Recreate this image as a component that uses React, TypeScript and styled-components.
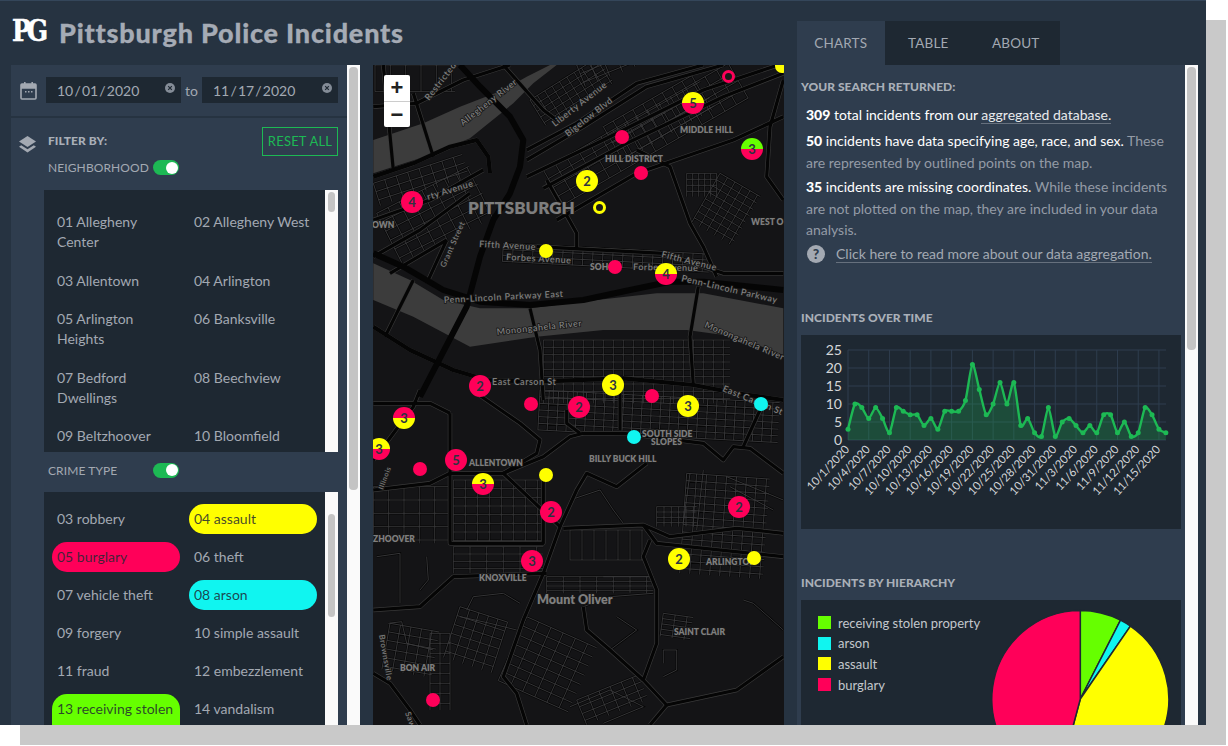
import React from "react";
import styled, { createGlobalStyle } from "styled-components";

const FONT = `Lato, "Open Sans", "Liberation Sans", sans-serif`;

const Global = createGlobalStyle`
  html, body { margin: 0; padding: 0; background: #fff; font-family: ${FONT}; }
  * { box-sizing: border-box; }
`;

const Page = styled.div`width: 1228px; height: 746px; overflow: hidden; background: #fff;`;
const Win = styled.div`
  width: 1206px; height: 725px; display: flex; padding-left: 11px; overflow: hidden;
  background: #263341; box-shadow: 20px 20px 0 #c9c9c9; border-top: 1px solid #34465a;
`;
const Main = styled.div`width: 773px; display: flex; flex-direction: column;`;
const Header = styled.header`height: 64px; display: flex; align-items: center; flex: none; padding-bottom: 2px;`;
const Logo = styled.div`
  width: 48px; font: 700 25px/1 "DejaVu Serif", serif; color: #fff; letter-spacing: -4px; margin-left: 1px; margin-top: -3px;
  transform: scaleY(1.2); -webkit-text-stroke: .5px #fff;
`;
const Title = styled.h1`margin: 0 0 0 -1px; font: 900 27px/1 ${FONT}; color: #a5abb5; letter-spacing: .8px; -webkit-text-stroke: .3px #a5abb5;`;
const Body = styled.div`display: flex; height: 660px;`;
const LeftPanel = styled.div`width: 336px; height: 660px; background: #2f3d4e; overflow: hidden; flex: none;`;
const Track = styled.div`width: 13px; flex: none; background: #fafafa; padding: 2px 2px 0;`;
const Thumb = styled.div<{ $h: number; $top?: number; $w?: number }>`
  height: ${p => p.$h}px; margin-top: ${p => p.$top ?? 0}px; background: #c4c4c4; border-radius: 4px;
  width: ${p => p.$w ?? 9}px; margin-left: ${p => (p.$w ? 1 : 0)}px;
`;
const DateRow = styled.div`
  height: 53px; display: flex; align-items: flex-start; padding: 12px 9px 0; border-bottom: 2px solid #263341;
`;
const CalIcon = styled.svg`width: 17px; height: 18px; margin-top: 5px; margin-right: 9px; flex: none;`;
const DateField = styled.div<{ $w: number }>`
  width: ${p => p.$w}px; height: 26px; background: #1e2832; color: #a3a9b2; font-size: 14px; line-height: 27px;
  padding-left: 11px; position: relative; word-spacing: -2.4px; white-space: pre;
`;
const Clear = styled.svg`position: absolute; right: 6px; top: 6px; width: 10px; height: 10px;`;
const To = styled.span`width: 21px; text-align: center; font-size: 14px; line-height: 27px; color: #a3a9b2; flex: none;`;
const FilterHead = styled.div`height: 72px; display: flex; padding: 9px 9px 0 8px;`;
const LayersIcon = styled.svg`width: 17px; height: 18px; margin: 9px 12px 0 0; flex: none;`;
const FilterCol = styled.div`flex: 1; padding-top: 6px;`;
const SmallBold = styled.div<{ $mt?: number }>`
  font: 900 12px/16px ${FONT}; color: #a9afb8; letter-spacing: .05px; margin-top: ${p => p.$mt ?? 0}px;
`;
const LabelRow = styled.div`display: flex; align-items: center; color: #a3a9b2; font-size: 12px;`;
const NeighRow = styled(LabelRow)`margin-top: 11px;`;
const Label = styled.span`width: 105px; flex: none; text-transform: uppercase; letter-spacing: .1px;`;
const Toggle = styled.div`
  width: 26px; height: 15px; border-radius: 8px; background: #1db954; display: flex; justify-content: flex-end; padding: 1.5px 1.5px;
  &::after { content: ""; width: 12px; height: 12px; border-radius: 50%; background: #fff; }
`;
const Reset = styled.button`
  width: 76px; height: 29px; border: 1px solid #1db954; background: transparent; color: #1db954;
  font: 400 13px/1 ${FONT}; letter-spacing: .2px; padding: 0;
`;
const ListBox = styled.div<{ $h: number }>`
  margin-left: 33px; width: 294px; height: ${p => p.$h}px; display: flex; background: #1e2832; overflow: hidden; flex: none;
`;
const ListGrid = styled.div<{ $top: number; $gap: number }>`
  flex: 1; display: grid; grid-template-columns: 128px 128px; column-gap: 9px; row-gap: ${p => p.$gap}px; align-content: start; align-items: start;
  padding: ${p => p.$top}px 0 0 8px; overflow: hidden;
`;
const Item = styled.div<{ $bg?: string }>`
  padding: 5px 3px 5px 5px; font-size: 14px; line-height: 20px; border-radius: 15px;
  background: ${p => p.$bg ?? "transparent"}; color: ${p => (p.$bg ? "rgba(30,40,50,.85)" : "#a3a9b2")};
`;
const CrimeRow = styled(LabelRow)`height: 40px; padding: 0 0 4px 37px;`;
const MapWrap = styled.div`width: 411px; height: 660px; margin-left: 13px; background: #141416; position: relative; overflow: hidden; flex: none;`;
const MapSvg = styled.svg`display: block; width: 411px; height: 660px;`;
const Zoom = styled.div`
  position: absolute; left: 11px; top: 10px; width: 26px; height: 52px; background: #fff; border-radius: 2px; display: flex; flex-direction: column;
`;
const ZoomBtn = styled.div`
  height: 26px; display: flex; align-items: center; justify-content: center; color: #222; font: 700 22px/1 "Liberation Sans", sans-serif;
  & + & { border-top: 1px solid #ccc; }
`;
const Marker = styled.div<{ $bg: string; $size: number }>`
  position: absolute; width: ${p => p.$size}px; height: ${p => p.$size}px; margin: ${p => -p.$size / 2}px 0 0 ${p => -p.$size / 2}px;
  border-radius: 50%; background: ${p => p.$bg}; color: #2b3440; font: 700 13px/1 ${FONT};
  display: flex; align-items: center; justify-content: center;
`;
const Ring = styled.div<{ $c: string }>`
  position: absolute; width: 13px; height: 13px; margin: -6.5px 0 0 -6.5px; border-radius: 50%; border: 3.5px solid ${p => p.$c}; background: #1a1a1a;
`;
const Side = styled.div`width: 401px; margin-left: 13px; padding-top: 20px; display: flex; flex-direction: column; height: 724px;`;
const Tabs = styled.div`display: flex; height: 44px; flex: none;`;
const Tab = styled.div<{ $active?: boolean }>`
  width: 87.5px; display: flex; align-items: center; justify-content: center; text-transform: uppercase; font-size: 13.5px; letter-spacing: .2px;
  color: #a3a9b2; background: ${p => (p.$active ? "#2f3d4e" : "#1e2832")};
`;
const SideRow = styled.div`display: flex; height: 660px;`;
const Content = styled.div`width: 388px; background: #2f3d4e; padding: 14px 4px 0; overflow: hidden;`;
const Para = styled.p<{ $mt: number }>`
  margin: ${p => p.$mt}px 0 0 5px; font-size: 14px; line-height: 21.5px; color: #949ba6; width: 372px;
`;
const Strong = styled.span`color: #fff;`;
const Num = styled.b`color: #fff; font-weight: 900;`;
const LinkW = styled.span`color: #e8eaec; border-bottom: 1px solid #66707d;`;
const Help = styled.div`display: flex; align-items: center; margin: 4.5px 0 0 6px; font-size: 14px; line-height: 21.5px; color: #a3a9b2;`;
const HelpDot = styled.span`
  width: 18px; height: 18px; border-radius: 50%; background: #a3a9b2; color: #2f3d4e; font: 900 14px/18px ${FONT}; text-align: center; margin-right: 11px; flex: none;
`;
const HelpLink = styled.span`border-bottom: 1px solid #66707d; line-height: 17px;`;
const ChartBox = styled.div`width: 380px; height: 194px; background: #1e2832; margin-top: 9px;`;
const PieBox = styled.div`width: 380px; height: 200px; background: #1e2832; margin-top: 9px; display: flex; justify-content: space-between; padding: 16px 9px 0 17px;`;
const Legend = styled.div`display: flex; flex-direction: column; gap: 7.7px; flex: none;`;
const LegendRow = styled.div`display: flex; align-items: center; height: 13px; font-size: 13px; color: #c3c7cc; white-space: nowrap;`;
const Swatch = styled.span<{ $c: string }>`width: 13px; height: 13px; background: ${p => p.$c}; margin-right: 7px;`;
const PieSvg = styled.svg`width: 184px; height: 190px; margin-top: -16px; flex: none;`;
const ChartSvg = styled.svg`display: block; width: 380px; height: 194px;`;

const PINK = "#ff0059", YEL = "#ffff00", CY = "#10f5f0", GR = "#66ff00";
type Pt = [number, number];
const z3 = ([x, y]: Pt): Pt => [x / 3 - 3, y / 3 - 5];
const z4 = ([x, y]: Pt): Pt => [x / 3 - 3, y / 3 + 325];
const pathOf = (pts: Pt[], f: (p: Pt) => Pt) => pts.map((p, i) => (i ? "L" : "M") + f(p).map(v => v.toFixed(1)).join(" ")).join("");

const majorA: Pt[][] = [
  [[270, 15], [330, 80], [420, 170], [460, 240], [450, 320], [420, 400], [370, 480], [330, 590], [290, 740], [150, 1010]],
  [[10, 350], [130, 310], [240, 260], [320, 240], [355, 290], [360, 340]],
  [[10, 580], [100, 620], [220, 690], [330, 725], [480, 735], [640, 720], [780, 690], [900, 665], [1000, 665], [1240, 690]],
  [[470, 270], [620, 190], [800, 70], [1000, 15]],
  [[470, 350], [700, 240], [1000, 90], [1240, 10]],
  [[130, 660], [45, 830]],
  [[480, 745], [510, 870], [520, 1020]],
  [[985, 680], [960, 830], [970, 975]],
  [[10, 800], [120, 870], [250, 930], [350, 960], [500, 965], [760, 955], [970, 975], [1100, 1000], [1240, 1020]],
  [[10, 140], [140, 130], [280, 60], [420, 15]],
  [[800, 270], [900, 320], [960, 490], [1000, 560], [1040, 650]],
  [[1240, 60], [1200, 200], [1190, 350], [1240, 420]],
  [[530, 360], [620, 520], [620, 570]],
  [[400, 15], [520, 150], [560, 180]],
  [[10, 590], [150, 510], [300, 400]],
  [[470, 300], [640, 200], [830, 80], [1060, 15]],
  [[520, 385], [760, 255], [1060, 110], [1240, 40]],
  [[560, 480], [800, 340], [1090, 240], [1240, 170]],
  [[40, 15], [70, 330]],
  [[130, 100], [190, 290]],
  [[500, 560], [880, 580], [1060, 640], [1240, 640]],
  [[10, 480], [180, 420], [340, 330]],
  [[60, 640], [230, 540]],
  [[230, 540], [170, 670]],
];
const majorB: Pt[][] = [
  [[10, 300], [180, 280], [240, 250], [400, 250], [520, 200], [600, 140], [640, 130], [760, 130], [1000, 160], [1060, 210], [1090, 170], [1140, 175], [1240, 250]],
  [[240, 70], [240, 460], [520, 460], [520, 250]],
  [[240, 70], [180, 40], [10, 40]],
  [[10, 660], [150, 650], [250, 560], [530, 550]],
  [[400, 250], [570, 410], [520, 550], [460, 690], [400, 860], [440, 910], [470, 1005]],
  [[570, 410], [620, 300], [650, 250], [740, 290], [830, 220]],
  [[580, 415], [820, 405], [900, 440], [1100, 415], [1240, 430]],
  [[820, 405], [860, 460], [1240, 500]],
  [[840, 450], [820, 500], [860, 600], [860, 760], [820, 870], [890, 945], [1100, 900], [1240, 800]],
  [[890, 945], [840, 1005]],
  [[640, 650], [650, 720], [720, 780], [820, 870]],
  [[10, 850], [60, 880], [120, 960], [150, 1005]],
  [[590, 60], [590, 100], [630, 130]],
  [[320, 10], [450, 100], [510, 150], [500, 190], [400, 250]],
  [[1170, 60], [1120, 170]],
  [[750, 0], [750, 120]],
  [[150, 0], [130, 50], [40, 170], [10, 210]],
];

const minorB: Pt[][] = [
  [[290, 660], [310, 620], [400, 610], [450, 640]],
  [[270, 680], [360, 700], [440, 720]],
  [[600, 330], [690, 300], [730, 360], [760, 400]],
  [[880, 820], [880, 780], [920, 780], [920, 840], [880, 860]],
  [[700, 560], [840, 560]],
  [[640, 650], [720, 620], [850, 610]],
  [[1120, 630], [1150, 640], [1240, 720]],
  [[55, 700], [95, 695], [110, 760], [190, 780]],
  [[600, 950], [720, 900], [820, 950], [700, 1000]],
  [[720, 780], [800, 720], [740, 680]],
  [[960, 250], [940, 400]],
  [[1000, 240], [980, 420]],
  [[1070, 260], [1240, 330]],
  [[1080, 290], [1210, 360]],
  [[170, 500], [175, 570], [150, 600]],
  [[20, 500], [90, 490], [90, 640]],
];

const grid = (x: number, y: number, w: number, h: number, a: number, dx: number, dy: number, f: (p: Pt) => Pt) => {
  const r = (a * Math.PI) / 180, c = Math.cos(r), s = Math.sin(r);
  const t = (u: number, v: number): Pt => [x + u * c - v * s, y + u * s + v * c];
  let d = "";
  for (let u = 0; u <= w; u += dx) d += pathOf([t(u, 0), t(u, h)], f);
  for (let v = 0; v <= h; v += dy) d += pathOf([t(0, v), t(w, v)], f);
  return d;
};
const streets = [
  grid(20, 460, 310, 170, -27, 38, 30, z3),
  grid(10, 370, 280, 70, -18, 36, 26, z3),
  grid(480, 120, 240, 90, -32, 26, 20, z3),
  grid(520, 330, 640, 120, -30, 40, 30, z3),
  grid(700, 200, 320, 120, -30, 34, 28, z3),
  grid(400, 550, 620, 55, 3, 30, 18, z3),
  grid(520, 840, 560, 190, 0, 30, 22, z3),
  grid(510, 0, 720, 120, 3, 28, 20, z4),
  grid(10, 290, 230, 170, 0, 46, 40, z4),
  grid(250, 270, 270, 190, 0, 36, 26, z4),
  grid(250, 470, 270, 80, 0, 50, 22, z4),
  grid(530, 560, 320, 50, 0, 50, 14, z4),
  grid(950, 250, 250, 300, 4, 30, 22, z4),
  grid(600, 420, 220, 90, 0, 36, 90, z4),
  grid(860, 350, 120, 60, 0, 22, 16, z4),
  grid(470, 680, 230, 210, 24, 40, 30, z4),
  grid(270, 650, 150, 160, 18, 30, 28, z4),
  grid(60, 700, 150, 140, 10, 32, 26, z4),
  grid(620, 930, 200, 80, -22, 36, 22, z4),
  grid(180, 730, 60, 230, 0, 30, 30, z4),
  grid(880, 670, 90, 70, 8, 36, 16, z4),
  grid(950, 340, 90, 70, 0, 18, 18, z3),
  grid(1050, 340, 140, 170, 30, 26, 22, z3),
  grid(15, 15, 240, 80, 0, 46, 80, z3),
  grid(620, 15, 400, 70, -22, 40, 28, z3),
].join("") + minorB.map(r => pathOf(r, z4)).join("");

const riverTop = pathOf([[540, 15], [470, 50], [400, 90], [270, 140], [160, 190], [10, 240], [10, 340], [180, 285], [300, 235], [430, 130], [490, 70], [560, 15]], z3) + "Z";
const riverMain = pathOf([[10, 610], [120, 660], [220, 720], [330, 745], [480, 745], [680, 720], [860, 700], [1000, 700], [1240, 745], [1240, 885], [1100, 830], [950, 810], [700, 810], [500, 830], [300, 860], [130, 770], [10, 720]], z3) + "Z";

type L = { t: string; x: number; y: number; s?: number; r?: number; w?: number };
const labels: L[] = [
  { t: "PITTSBURGH", x: 95, y: 149, s: 17, w: 800 },
  { t: "MIDDLE HILL", x: 307, y: 68, s: 8.5 },
  { t: "HILL DISTRICT", x: 232, y: 97, s: 8.5 },
  { t: "WEST O", x: 378, y: 160, s: 8.5 },
  { t: "OWN", x: -1, y: 163, s: 8.5 },
  { t: "SOHO", x: 217, y: 205, s: 8.5 },
  { t: "ALLENTOWN", x: 96, y: 401, s: 8.5 },
  { t: "SOUTH SIDE", x: 269, y: 372, s: 8.5 },
  { t: "SLOPES", x: 278, y: 380, s: 8.5 },
  { t: "BILLY BUCK HILL", x: 216, y: 397, s: 8.5 },
  { t: "ZHOOVER", x: 0, y: 477, s: 8.5 },
  { t: "KNOXVILLE", x: 106, y: 516, s: 8.5 },
  { t: "Mount Oliver", x: 164, y: 539, s: 12.5 },
  { t: "SAINT CLAIR", x: 301, y: 570, s: 8.5 },
  { t: "ARLINGTON", x: 333, y: 500, s: 8.5 },
  { t: "BON AIR", x: 27, y: 606, s: 8.5 },
  { t: "Restricted", x: 56, y: 36, s: 9, r: -52, w: 600 },
  { t: "Allegheny River", x: 90, y: 61, s: 9, r: -38, w: 600 },
  { t: "Liberty Avenue", x: 182, y: 62, s: 9, r: -38, w: 600 },
  { t: "Bigelow Blvd", x: 195, y: 72, s: 9, r: -38, w: 600 },
  { t: "rty Avenue", x: 55, y: 135, s: 9, r: -17, w: 600 },
  { t: "Grant Street", x: 72, y: 203, s: 8, r: -66, w: 600 },
  { t: "Fifth Avenue", x: 106, y: 182, s: 9, r: 3, w: 600 },
  { t: "Forbes Avenue", x: 133, y: 195, s: 9, r: 3, w: 600 },
  { t: "Forbes Avenue", x: 260, y: 205, s: 9, r: 1, w: 600 },
  { t: "Fifth Avenue", x: 288, y: 192, s: 9, r: 14, w: 600 },
  { t: "Penn-Lincoln Parkway", x: 308, y: 216, s: 9, r: 13, w: 600 },
  { t: "Penn-Lincoln Parkway East", x: 71, y: 238, s: 9, r: -3, w: 600 },
  { t: "Monongahela River", x: 124, y: 270, s: 9, r: -6, w: 600 },
  { t: "Monongahela River", x: 331, y: 262, s: 9, r: 23, w: 600 },
  { t: "East Carson St", x: 119, y: 320, s: 9, r: 0, w: 600 },
  { t: "East Carson St", x: 349, y: 326, s: 9, r: 22, w: 600 },
  { t: "Illinois", x: 10, y: 425, s: 7, r: -70, w: 600 },
  { t: "Brownsville", x: 6, y: 570, s: 8, r: 80, w: 600 },
  { t: "Saw Mill", x: 32, y: 648, s: 8, r: 70, w: 600 },
];

const split = (a: string, b: string) => `linear-gradient(${a} 50%, ${b} 50%)`;
const markers: { x: number; y: number; bg: string; n?: number }[] = [
  { x: 693, y: 103, bg: split(YEL, PINK), n: 5 },
  { x: 622, y: 137, bg: PINK },
  { x: 752, y: 149, bg: split(GR, PINK), n: 3 },
  { x: 641, y: 173, bg: PINK },
  { x: 587, y: 181, bg: YEL, n: 2 },
  { x: 412, y: 202, bg: PINK, n: 4 },
  { x: 546, y: 251, bg: YEL },
  { x: 615, y: 267, bg: PINK },
  { x: 666, y: 274, bg: split(YEL, PINK), n: 4 },
  { x: 480, y: 386, bg: PINK, n: 2 },
  { x: 613, y: 385, bg: YEL, n: 3 },
  { x: 531, y: 404, bg: PINK },
  { x: 579, y: 407, bg: PINK, n: 2 },
  { x: 652, y: 396, bg: PINK },
  { x: 688, y: 406, bg: YEL, n: 3 },
  { x: 761, y: 404, bg: CY },
  { x: 634, y: 437, bg: CY },
  { x: 404, y: 418, bg: split(PINK, YEL), n: 3 },
  { x: 379, y: 449, bg: split(YEL, PINK), n: 3 },
  { x: 456, y: 460, bg: PINK, n: 5 },
  { x: 420, y: 469, bg: PINK },
  { x: 483, y: 484, bg: split(YEL, PINK), n: 3 },
  { x: 546, y: 475, bg: YEL },
  { x: 551, y: 512, bg: PINK, n: 2 },
  { x: 739, y: 507, bg: PINK, n: 2 },
  { x: 532, y: 561, bg: PINK, n: 3 },
  { x: 679, y: 559, bg: YEL, n: 2 },
  { x: 754, y: 558, bg: YEL },
  { x: 433, y: 700, bg: PINK },
  { x: 782, y: 66, bg: YEL },
];

const MapArea = () => {
  const roads = majorA.map(r => pathOf(r, z3)).concat(majorB.map(r => pathOf(r, z4)));
  return (
    <MapWrap>
      <MapSvg viewBox="0 0 411 660">
        <path d={riverTop} fill="#3c3c3c" />
        <path d={riverMain} fill="#3c3c3c" />
        <path d={streets} fill="none" stroke="#060606" strokeWidth="2.2" />
        <path d={streets} fill="none" stroke="#3a3a3c" strokeWidth=".9" />
        {roads.map((d, i) => <path key={"c" + i} d={d} fill="none" stroke="#3a3a3a" strokeWidth="4.4" strokeLinejoin="round" />)}
        {roads.map((d, i) => <path key={"r" + i} d={d} fill="none" stroke="#050505" strokeWidth={i < 3 || i === 8 ? 4.2 : 3.2} strokeLinejoin="round" />)}
        <path d={pathOf(majorA[0], z3) + pathOf(majorA[2], z3)} fill="none" stroke="#050505" strokeWidth="6" strokeLinejoin="round" />
        {labels.map(l => (
          <text key={l.t + l.x} x={l.x} y={l.y} fontFamily={FONT} fontSize={l.s} fontWeight={l.w ?? 800}
            letterSpacing={l.r !== undefined ? ".5" : "0"}
            fill="#7e7e7e" stroke="#181818" strokeWidth="1.6" paintOrder="stroke"
            transform={l.r ? `rotate(${l.r} ${l.x} ${l.y})` : undefined}>{l.t}</text>
        ))}
      </MapSvg>
      <Zoom><ZoomBtn>+</ZoomBtn><ZoomBtn>−</ZoomBtn></Zoom>
      {markers.map(m => (
        <Marker key={`${m.x}-${m.y}`} $bg={m.bg} $size={m.n ? 22 : 14} style={{ left: m.x - 373, top: m.y - 65 }}>{m.n}</Marker>
      ))}
      <Ring $c={PINK} style={{ left: 728 - 373, top: 76 - 65 }} />
      <Ring $c={YEL} style={{ left: 599 - 373, top: 207 - 65 }} />
    </MapWrap>
  );
};

const hoods = ["01 Allegheny Center", "02 Allegheny West", "03 Allentown", "04 Arlington", "05 Arlington Heights", "06 Banksville", "07 Bedford Dwellings", "08 Beechview", "09 Beltzhoover", "10 Bloomfield", "11 Bluff", "12 Bon Air"];
const crimes: { t: string; c?: string }[] = [
  { t: "03 robbery" }, { t: "04 assault", c: YEL }, { t: "05 burglary", c: PINK }, { t: "06 theft" },
  { t: "07 vehicle theft" }, { t: "08 arson", c: CY }, { t: "09 forgery" }, { t: "10 simple assault" },
  { t: "11 fraud" }, { t: "12 embezzlement" }, { t: "13 receiving stolen property", c: GR }, { t: "14 vandalism" },
];

const ClearIcon = () => (
  <Clear viewBox="0 0 11 11">
    <circle cx="5.5" cy="5.5" r="5.5" fill="#848c97" />
    <path d="M3.5 3.5l4 4M7.5 3.5l-4 4" stroke="#1e2832" strokeWidth="1.3" />
  </Clear>
);

const series = [3, 10, 9, 6, 9, 6, 2, 9, 8, 7, 7, 4, 6, 3, 8, 8, 8, 11, 21, 14, 7, 10, 16, 10, 16, 4, 6, 2, 1, 9, 1, 5, 6, 4, 2, 4, 2, 7, 7, 2, 5, 1, 2, 9, 7, 3, 2];
const dateLabels = ["10/1/2020", "10/4/2020", "10/7/2020", "10/10/2020", "10/13/2020", "10/16/2020", "10/19/2020", "10/22/2020", "10/25/2020", "10/28/2020", "10/31/2020", "11/3/2020", "11/6/2020", "11/9/2020", "11/12/2020", "11/15/2020"];
const X0 = 47, STEP = 6.91, Y0 = 105, UNIT = 3.6;
const pts: Pt[] = series.map((v, i) => [X0 + i * STEP, Y0 - v * UNIT]);
const curve = pts.reduce((d, p, i) => {
  if (!i) return `M${p[0]} ${p[1]}`;
  const a = pts[i - 2] ?? pts[i - 1], b = pts[i - 1], c = pts[i + 1] ?? p, k = 0.12;
  return d + `C${b[0] + (p[0] - a[0]) * k} ${b[1] + (p[1] - a[1]) * k} ${p[0] - (c[0] - b[0]) * k} ${p[1] - (c[1] - b[1]) * k} ${p[0]} ${p[1]}`;
}, "");

const LineChart = () => (
  <ChartSvg viewBox="0 0 380 194">
    {[0, 5, 10, 15, 20, 25].map(v => (
      <g key={v}>
        <line x1="47" x2="365" y1={Y0 - v * UNIT} y2={Y0 - v * UNIT} stroke="#2e3d4e" />
        <text x="41" y={Y0 - v * UNIT + 5} textAnchor="end" fontFamily={FONT} fontSize="14" fill="#d4d6d9">{v}</text>
      </g>
    ))}
    {dateLabels.map((l, i) => {
      const x = X0 + i * 3 * STEP;
      return (
        <g key={l}>
          <line x1={x} x2={x} y1="15" y2={Y0} stroke="#2e3d4e" />
          <text x={x + 2} y={Y0 + 10} textAnchor="end" fontFamily={FONT} fontSize="11.5" letterSpacing="-.1" fill="#d4d6d9" transform={`rotate(-47 ${x + 2} ${Y0 + 10})`}>{l}</text>
        </g>
      );
    })}
    <path d={`${curve}L${pts[46][0]} ${Y0}L${X0} ${Y0}Z`} fill="#1db954" fillOpacity=".25" />
    <path d={curve} fill="none" stroke="#1db954" strokeWidth="2.4" />
    {pts.map((p, i) => <circle key={i} cx={p[0]} cy={p[1]} r="2.5" fill="#1db954" />)}
  </ChartSvg>
);

const slice = (a0: number, a1: number) => {
  const cx = 92.3, cy = 99, r = 88.5;
  const pt = (a: number) => `${cx + r * Math.sin((a * Math.PI) / 180)} ${cy - r * Math.cos((a * Math.PI) / 180)}`;
  return `M${cx} ${cy}L${pt(a0)}A${r} ${r} 0 ${a1 - a0 > 180 ? 1 : 0} 1 ${pt(a1)}Z`;
};
const PieChart = () => (
  <PieSvg viewBox="0 0 184 190">
    {([[0, 27, GR], [27, 34.5, CY], [34.5, 195, YEL], [195, 360, PINK]] as [number, number, string][]).map(([a, b, c]) => (
      <path key={c} d={slice(a, b)} fill={c} stroke="#1e2832" strokeWidth="1.5" />
    ))}
  </PieSvg>
);

export default function App() {
  return (
    <Page>
      <Global />
      <Win>
        <Main>
          <Header>
            <Logo>PG</Logo>
            <Title>Pittsburgh Police Incidents</Title>
          </Header>
          <Body>
            <LeftPanel>
              <DateRow>
                <CalIcon viewBox="0 0 17 18">
                  <path d="M1 5h15v11a1 1 0 0 1-1 1H2a1 1 0 0 1-1-1zM1 3a1 1 0 0 1 1-1h13a1 1 0 0 1 1 1v3H1z" fill="none" stroke="#a3a9b2" strokeWidth="1.6" />
                  <path d="M1 2h15v4H1zM4 0h1.6v3H4zM11.4 0H13v3h-1.6z" fill="#a3a9b2" />
                  <path d="M5 9h1.5v1.5H5zM8 9h1.5v1.5H8zM11 9h1.5v1.5H11z" fill="#a3a9b2" />
                </CalIcon>
                <DateField $w={135}>10 / 01 / 2020<ClearIcon /></DateField>
                <To>to</To>
                <DateField $w={136}>11 / 17 / 2020<ClearIcon /></DateField>
              </DateRow>
              <FilterHead>
                <LayersIcon viewBox="0 0 17 18">
                  <path d="M8.5 0L17 5.5 8.5 11 0 5.5z" fill="#a3a9b2" />
                  <path d="M2.2 9.2L0 10.8 8.5 16.5 17 10.8l-2.2-1.6-6.3 4z" fill="#a3a9b2" />
                </LayersIcon>
                <FilterCol>
                  <SmallBold>FILTER BY:</SmallBold>
                  <NeighRow><Label>Neighborhood</Label><Toggle /></NeighRow>
                </FilterCol>
                <Reset>RESET ALL</Reset>
              </FilterHead>
              <ListBox $h={262}>
                <ListGrid $top={17} $gap={8.5}>{hoods.map(h => <Item key={h}>{h}</Item>)}</ListGrid>
                <Track><Thumb $h={20} $w={7} /></Track>
              </ListBox>
              <CrimeRow><Label>Crime Type</Label><Toggle /></CrimeRow>
              <ListBox $h={240}>
                <ListGrid $top={12} $gap={8}>{crimes.map(c => <Item key={c.t} $bg={c.c}>{c.t}</Item>)}</ListGrid>
                <Track><Thumb $h={103} $top={20} $w={7} /></Track>
              </ListBox>
            </LeftPanel>
            <Track><Thumb $h={423} /></Track>
            <MapArea />
          </Body>
        </Main>
        <Side>
          <Tabs>
            <Tab $active>Charts</Tab>
            <Tab>Table</Tab>
            <Tab>About</Tab>
          </Tabs>
          <SideRow>
            <Content>
              <SmallBold>YOUR SEARCH RETURNED:</SmallBold>
              <Para $mt={9}><Num>309</Num> <Strong>total incidents from our <LinkW>aggregated database.</LinkW></Strong></Para>
              <Para $mt={4.5}><Num>50</Num> <Strong>incidents have data specifying age, race, and sex.</Strong> These are represented by outlined points on the map.</Para>
              <Para $mt={3}><Num>35</Num> <Strong>incidents are missing coordinates.</Strong> While these incidents are not plotted on the map, they are included in your data analysis.</Para>
              <Help><HelpDot>?</HelpDot><HelpLink>Click here to read more about our data aggregation.</HelpLink></Help>
              <SmallBold $mt={47}>INCIDENTS OVER TIME</SmallBold>
              <ChartBox><LineChart /></ChartBox>
              <SmallBold $mt={46}>INCIDENTS BY HIERARCHY</SmallBold>
              <PieBox>
                <Legend>
                  <LegendRow><Swatch $c={GR} />receiving stolen property</LegendRow>
                  <LegendRow><Swatch $c={CY} />arson</LegendRow>
                  <LegendRow><Swatch $c={YEL} />assault</LegendRow>
                  <LegendRow><Swatch $c={PINK} />burglary</LegendRow>
                </Legend>
                <PieChart />
              </PieBox>
            </Content>
            <Track><Thumb $h={283} /></Track>
          </SideRow>
        </Side>
      </Win>
    </Page>
  );
}
